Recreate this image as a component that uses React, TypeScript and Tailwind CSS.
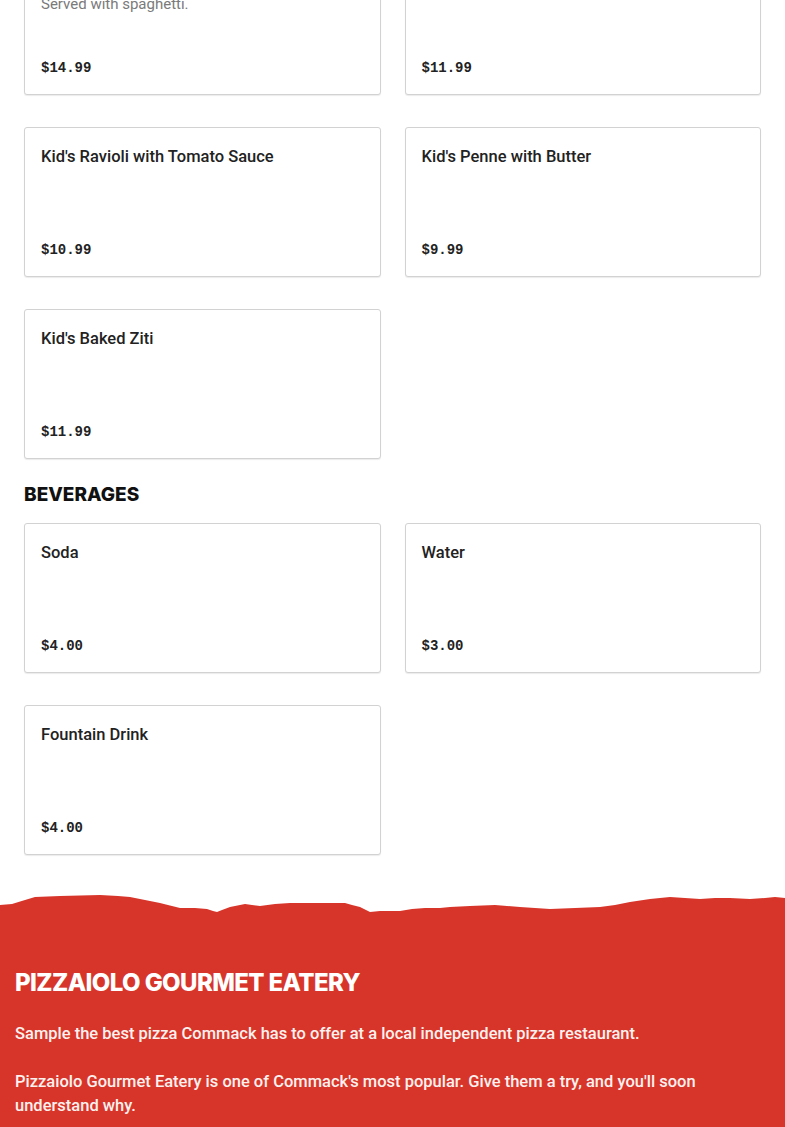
import React from "react"

interface Item {
    name: string;
    description?: string;
    price: string;
}

const kids: Item[] = [
    { name: "Kid's Spaghetti with Meatballs", description: "Served with spaghetti.", price: "$14.99" },
    { name: "Kid's Chicken Fingers", price: "$11.99" },
    { name: "Kid's Ravioli with Tomato Sauce", price: "$10.99" },
    { name: "Kid's Penne with Butter", price: "$9.99" },
    { name: "Kid's Baked Ziti", price: "$11.99" },
]

const beverages: Item[] = [
    { name: "Soda", price: "$4.00" },
    { name: "Water", price: "$3.00" },
    { name: "Fountain Drink", price: "$4.00" },
]

const MenuCard = ({ name, description, price }: Item) => {
    return (
        <div className="min-h-[150px] flex flex-col bg-white border border-[#d2d2d2] rounded-[3px] shadow-[0_1px_1px_rgba(0,0,0,0.08)] px-4 pt-[17px] pb-4">
            <div className="text-[16.5px] leading-6 font-medium text-[#222] font-['Roboto',sans-serif]">
                {name}
            </div>
            {description && (
                <div className="mt-[6px] text-[15px] leading-[22px] text-[#7a7a7a] font-['Roboto',sans-serif]">
                    {description}
                </div>
            )}
            <div className="mt-auto text-[14px] leading-5 font-bold text-[#222] font-['Liberation_Mono',monospace]">
                {price}
            </div>
        </div>
    )
}

const TornEdge = () => (
    <svg viewBox="0 0 785 22" preserveAspectRatio="none" className="block w-full h-[22px]">
        <path
            fill="#d8352a"
            d="M0 13 L12 12 L25 8 L35 5 L60 4 L100 3 L118 4 L130 5 L145 8 L160 11 L172 14 L180 16 L195 16 L207 17 L213 19 L217 20 L222 18 L230 15 L240 13 L245 12 L252 13 L260 14 L275 12 L290 11 L320 11 L345 11 L352 13 L360 15 L366 18 L370 20 L380 19 L400 19 L412 17 L425 16 L440 16 L450 15 L470 14 L495 13 L520 15 L550 17 L575 16 L600 15 L615 13 L630 10 L650 7 L670 5 L685 6 L700 7 L715 6 L730 6 L750 7 L765 6 L775 5 L785 6 L785 22 L0 22 Z"
        />
    </svg>
)

export default function App() {
    return (
        <div className="bg-white w-full overflow-hidden">
            <div className="px-6 pb-[37px] -mt-[55px]">
                <div className="grid grid-cols-2 gap-x-6 gap-y-8">
                    {kids.map((item, index) => (
                        <MenuCard key={index} {...item} />
                    ))}
                </div>

                <h2 className="mt-[22px] mb-[14px] text-[19px] leading-7 font-extrabold text-[#111] font-['Inter',sans-serif]">
                    BEVERAGES
                </h2>
                <div className="grid grid-cols-2 gap-x-6 gap-y-8">
                    {beverages.map((item, index) => (
                        <MenuCard key={index} {...item} />
                    ))}
                </div>
            </div>

            <TornEdge />
            <div className="bg-[#d8352a] px-[15px] pt-[55px] pb-10 text-[#fdf1ef]">
                <h3 className="text-[24px] leading-7 font-extrabold tracking-tight text-white font-['Inter',sans-serif]">
                    PIZZAIOLO GOURMET EATERY
                </h3>
                <p className="mt-[25px] text-[16.5px] leading-6 font-medium font-['Roboto',sans-serif] max-w-[700px]">
                    Sample the best pizza Commack has to offer at a local independent pizza restaurant.
                </p>
                <p className="mt-6 text-[16.5px] leading-6 font-medium font-['Roboto',sans-serif] max-w-[700px]">
                    Pizzaiolo Gourmet Eatery is one of Commack's most popular. Give them a try, and you'll soon understand why.
                </p>
            </div>
        </div>
    )
}
